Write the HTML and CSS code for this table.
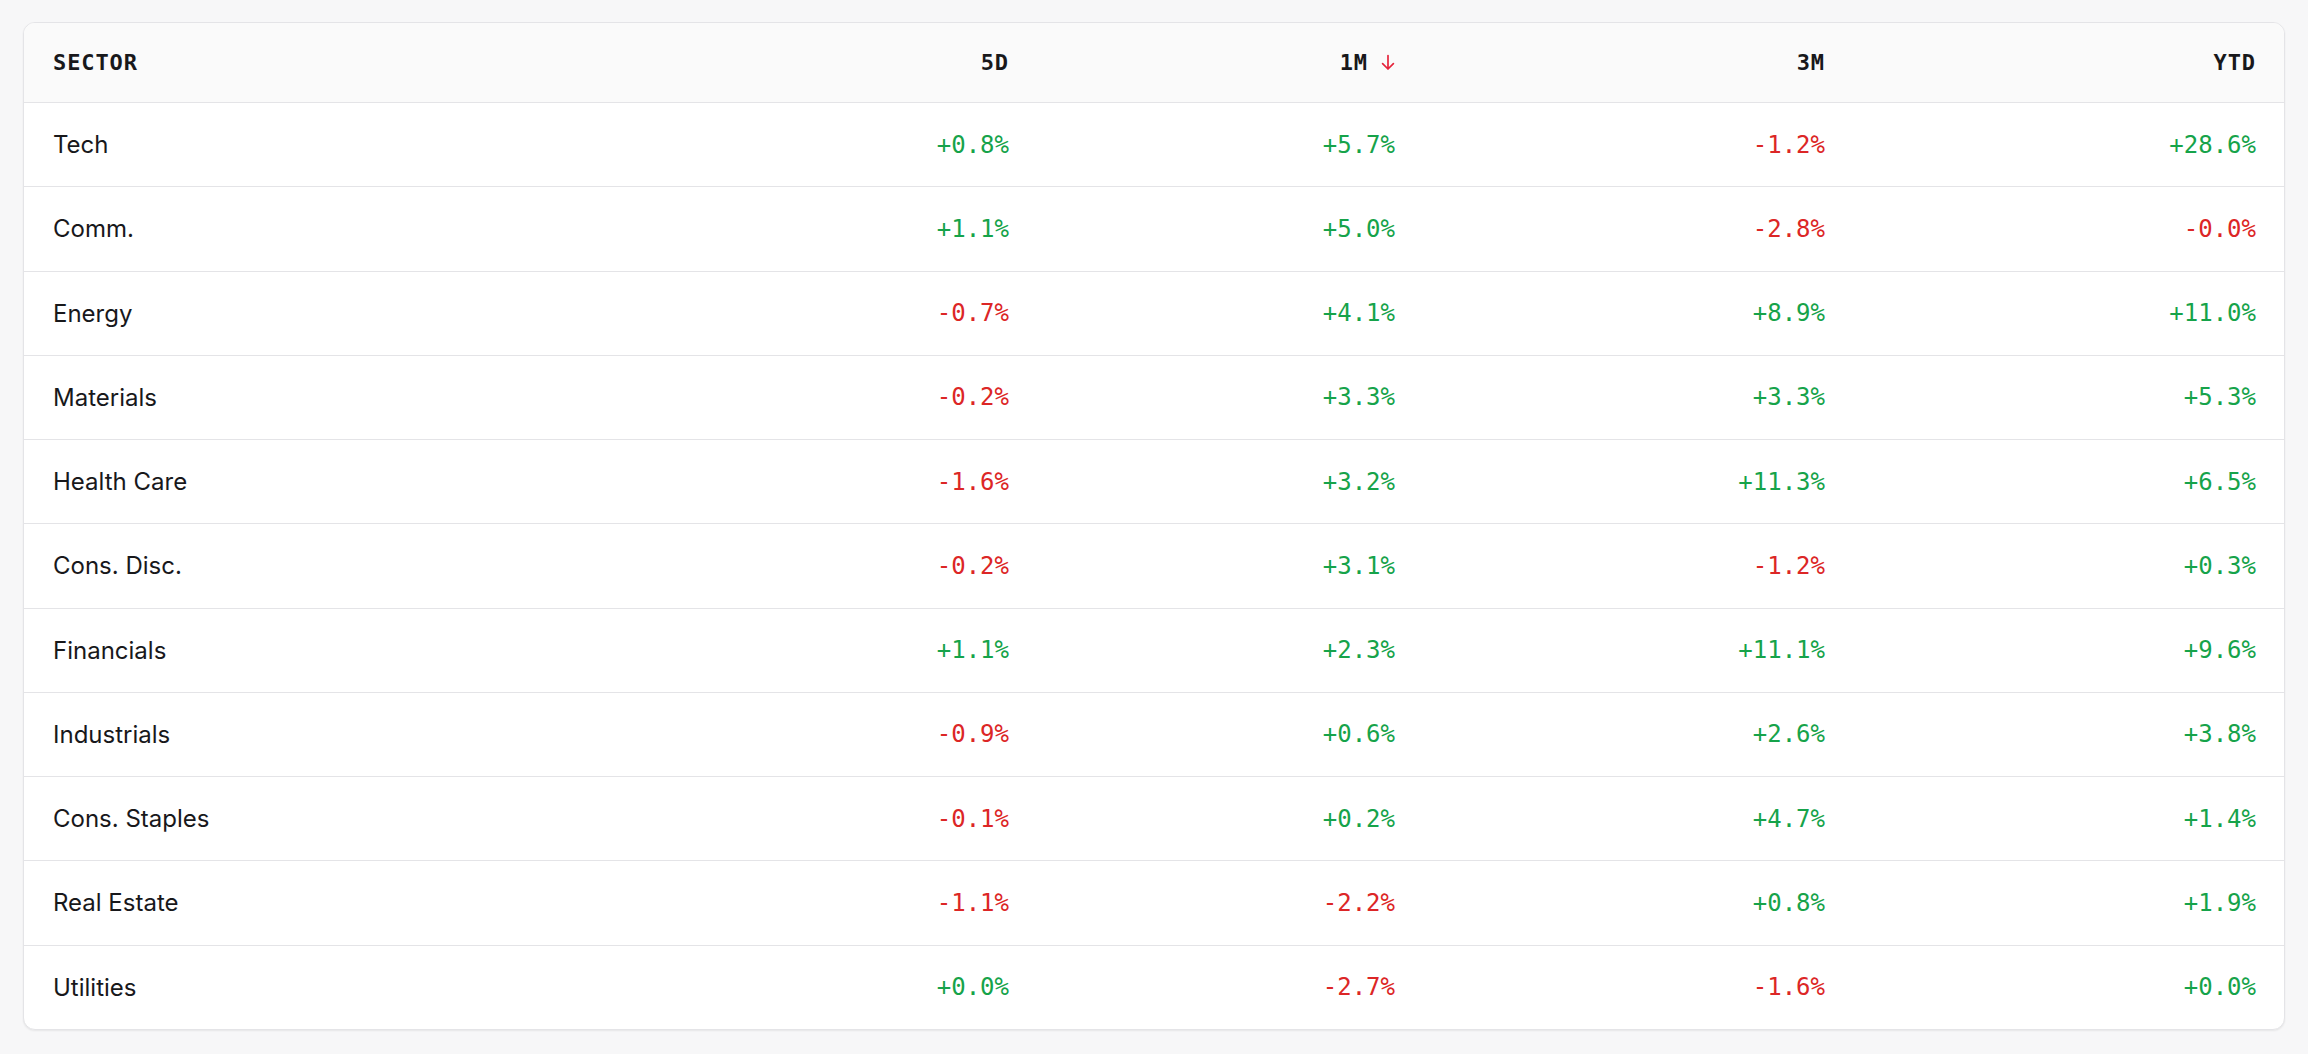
FILE: index.html
```html
<!DOCTYPE html>
<html lang="en">
<head>
<meta charset="utf-8">
<title>Sector performance</title>
<link rel="stylesheet" href="styles.css">
</head>
<body>
<div class="card">
  <div class="row head">
    <div class="cell name">SECTOR</div>
    <div class="cell num">5D</div>
    <div class="cell num sorted">1M <svg class="arrow" width="14" height="17" viewBox="0 0 14 17"><path d="M7 1.5V15M1.6 9.6L7 15l5.4-5.4" fill="none" stroke="currentColor" stroke-width="1.7" stroke-linecap="round" stroke-linejoin="round"/></svg></div>
    <div class="cell num">3M</div>
    <div class="cell num">YTD</div>
  </div>
  <div class="row"><div class="cell name">Tech</div><div class="cell num up">+0.8%</div><div class="cell num up">+5.7%</div><div class="cell num dn">-1.2%</div><div class="cell num up">+28.6%</div></div>
  <div class="row"><div class="cell name">Comm.</div><div class="cell num up">+1.1%</div><div class="cell num up">+5.0%</div><div class="cell num dn">-2.8%</div><div class="cell num dn">-0.0%</div></div>
  <div class="row"><div class="cell name">Energy</div><div class="cell num dn">-0.7%</div><div class="cell num up">+4.1%</div><div class="cell num up">+8.9%</div><div class="cell num up">+11.0%</div></div>
  <div class="row"><div class="cell name">Materials</div><div class="cell num dn">-0.2%</div><div class="cell num up">+3.3%</div><div class="cell num up">+3.3%</div><div class="cell num up">+5.3%</div></div>
  <div class="row"><div class="cell name">Health Care</div><div class="cell num dn">-1.6%</div><div class="cell num up">+3.2%</div><div class="cell num up">+11.3%</div><div class="cell num up">+6.5%</div></div>
  <div class="row"><div class="cell name">Cons. Disc.</div><div class="cell num dn">-0.2%</div><div class="cell num up">+3.1%</div><div class="cell num dn">-1.2%</div><div class="cell num up">+0.3%</div></div>
  <div class="row"><div class="cell name">Financials</div><div class="cell num up">+1.1%</div><div class="cell num up">+2.3%</div><div class="cell num up">+11.1%</div><div class="cell num up">+9.6%</div></div>
  <div class="row"><div class="cell name">Industrials</div><div class="cell num dn">-0.9%</div><div class="cell num up">+0.6%</div><div class="cell num up">+2.6%</div><div class="cell num up">+3.8%</div></div>
  <div class="row"><div class="cell name">Cons. Staples</div><div class="cell num dn">-0.1%</div><div class="cell num up">+0.2%</div><div class="cell num up">+4.7%</div><div class="cell num up">+1.4%</div></div>
  <div class="row"><div class="cell name">Real Estate</div><div class="cell num dn">-1.1%</div><div class="cell num dn">-2.2%</div><div class="cell num up">+0.8%</div><div class="cell num up">+1.9%</div></div>
  <div class="row"><div class="cell name">Utilities</div><div class="cell num up">+0.0%</div><div class="cell num dn">-2.7%</div><div class="cell num dn">-1.6%</div><div class="cell num up">+0.0%</div></div>
</div>
</body>
</html>
```
FILE: styles.css
```css
html, body {
  margin: 0;
  padding: 0;
  background: #f7f7f8;
}
body {
  padding: 22px 23px;
  font-family: Inter, "Noto Sans", "Liberation Sans", sans-serif;
  color: #18181b;
}
.card {
  background: #ffffff;
  border: 1px solid #e4e4e7;
  border-radius: 12px;
  overflow: hidden;
  box-shadow: 0 1px 2px rgba(0, 0, 0, 0.07);
}
.row {
  display: grid;
  grid-template-columns: 600px 413px 386px 430px 431px;
  height: 84.25px;
  box-sizing: border-box;
  border-top: 1px solid #e4e4e7;
  align-items: center;
}
.row.head {
  height: 79px;
  border-top: none;
  background: #fafafa;
}
.cell {
  padding: 0 28px;
  white-space: nowrap;
}
.cell.name {
  padding-left: 29px;
  font-size: 24px;
  color: #18181b;
}
.cell.num {
  text-align: right;
  font-family: "DejaVu Sans Mono", "Liberation Mono", monospace;
  font-size: 24px;
}
.head .cell {
  font-family: "DejaVu Sans Mono", "Liberation Mono", monospace;
  font-size: 22px;
  font-weight: bold;
  letter-spacing: 0.9px;
  color: #18181b;
}
.head .cell.num {
  font-size: 22px;
}
.head .sorted {
  display: flex;
  justify-content: flex-end;
  align-items: center;
  gap: 13px;
}
.arrow {
  color: #e5243b;
  display: block;
}
.up { color: #16a34a; }
.dn { color: #dc2626; }
```
